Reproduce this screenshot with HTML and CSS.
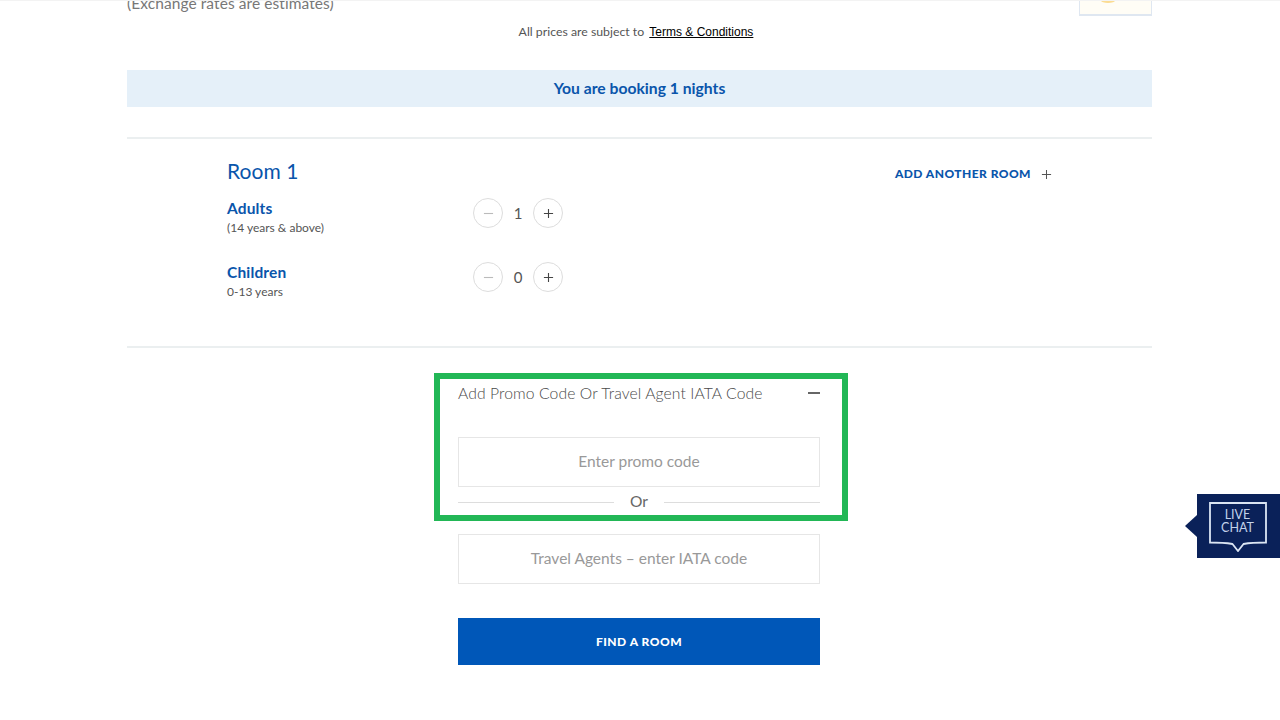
FILE: index.html
```html
<!DOCTYPE html>
<html lang="en">
<head>
<meta charset="utf-8">
<title>Booking</title>
<link rel="stylesheet" href="styles.css">
</head>
<body>
<main class="page">
  <div class="top-row">
    <p class="estimate">(Exchange rates are estimates)</p>
    <div class="thumb"><span class="sun"></span></div>
  </div>
  <p class="terms">All prices are subject to <a class="terms-link" href="#">Terms &amp; Conditions</a></p>
  <div class="banner">You are booking 1 nights</div>
  <section class="room">
    <div class="room-main">
      <h2 class="room-title">Room 1</h2>
      <div class="guest">
        <div class="guest-label"><h3>Adults</h3><p>(14 years &amp; above)</p></div>
        <div class="stepper">
          <span class="step step-off"><svg viewBox="0 0 12 12"><path d="M1 6h10"/></svg></span>
          <span class="count">1</span>
          <span class="step"><svg viewBox="0 0 12 12"><path d="M1 6h10M6 1v10"/></svg></span>
        </div>
      </div>
      <div class="guest">
        <div class="guest-label"><h3>Children</h3><p>0-13 years</p></div>
        <div class="stepper">
          <span class="step step-off"><svg viewBox="0 0 12 12"><path d="M1 6h10"/></svg></span>
          <span class="count">0</span>
          <span class="step"><svg viewBox="0 0 12 12"><path d="M1 6h10M6 1v10"/></svg></span>
        </div>
      </div>
    </div>
    <a class="add-room" href="#">ADD ANOTHER ROOM <svg viewBox="0 0 12 12"><path d="M1 6h10M6 1v10"/></svg></a>
  </section>
  <section class="promo">
    <div class="promo-head">
      <span>Add Promo Code Or Travel Agent IATA Code</span>
      <svg viewBox="0 0 12 2"><path d="M0 1h12"/></svg>
    </div>
    <div class="field field-first">Enter promo code</div>
    <div class="or"><span>Or</span></div>
    <div class="field field-second">Travel Agents – enter IATA code</div>
    <button class="find" type="button">FIND A ROOM</button>
  </section>
</main>
<div class="highlight"></div>
<aside class="chat">
  <svg class="chat-bubble" viewBox="0 0 58 50"><path d="M1 1h56v39.500c-13 0-17 .5-22.500 1.500l-5.500 7-5.500-7c-6-1-9.500-1.500-22.500-1.500z"/></svg>
  <span class="chat-text">LIVE<br>CHAT</span>
</aside>
</body>
</html>
```
FILE: styles.css
```css
html, body { margin: 0; height: 720px; overflow: hidden; background: #fff; }
body { font-family: Lato, "Open Sans", sans-serif; color: #444; border-top: 1px solid #f3f3f3; box-sizing: border-box; }
p, h2, h3 { margin: 0; font-weight: normal; }
a { color: inherit; }
.page { width: 1025px; margin: -1px 0 0 127px; }
.top-row { display: flex; justify-content: space-between; height: 18px; }
.estimate { font-size: 15.500px; letter-spacing: .08px; line-height: 18px; color: #777; margin-top: -6px; }
.thumb { width: 71px; height: 14px; border: 1px solid #dfe7f1; border-width: 0 1px 2px; background: #fffdf6; display: flex; justify-content: center; overflow: hidden; }
.sun { width: 14px; height: 5px; margin: -2px 0 0 -16px; background: #fbdc93; border-radius: 50%; }
.terms { font-size: 12.300px; line-height: 16px; margin-top: 6px; text-align: center; padding-right: 7px; color: #555; }
.terms-link { font-family: "Liberation Sans", sans-serif; font-size: 12px; color: #000; margin-left: 2px; }
.banner { margin-top: 30px; height: 37px; background: #e5f0f9; color: #0a55ab; font-size: 15.700px; font-weight: 700; line-height: 37px; text-align: center; }
.room { margin-top: 30px; border-top: 2px solid #ebeff0; border-bottom: 2px solid #ebeff0; height: 207px; padding: 0 100px; display: flex; justify-content: space-between; align-items: flex-start; }
.room-main { width: 340px; }
.room-title { font-size: 21px; letter-spacing: .05px; line-height: 26px; color: #0a55ab; margin-top: 19px; }
.guest { display: flex; height: 64px; margin-top: 11px; }
.guest + .guest { margin-top: 0; }
.guest-label { width: 246px; padding-top: 3px; }
.guest-label h3 { font-size: 15.500px; font-weight: 700; letter-spacing: .15px; line-height: 20px; color: #0a55ab; }
.guest-label p { font-size: 12px; line-height: 18px; margin-top: 1px; color: #555; }
.stepper { display: flex; align-items: center; height: 30px; margin-top: 3px; }
.step { width: 28px; height: 28px; border: 1px solid #ddd; border-radius: 50%; display: flex; align-items: center; justify-content: center; }
.step svg { width: 11px; height: 11px; fill: none; stroke: #444; stroke-width: 1.200; }
.step-off svg { stroke: #bbb; }
.count { width: 30px; text-align: center; font-size: 15px; color: #555; }
.add-room { display: flex; align-items: center; margin-top: 27px; font-size: 12px; font-weight: 900; letter-spacing: .45px; line-height: 16px; color: #0a55ab; text-decoration: none; }
.add-room svg { width: 11px; height: 11px; margin-left: 10px; fill: none; stroke: #555; stroke-width: 1.100; }
.promo { width: 362px; margin: 0 0 0 331px; }
.promo-head { display: flex; justify-content: space-between; align-items: center; height: 20px; margin-top: 35px; font-size: 15.700px; font-weight: 300; letter-spacing: .1px; color: #4a4a4a; }
.promo-head svg { width: 12px; height: 2px; fill: none; stroke: #333; stroke-width: 1.500; }
.field { height: 46px; padding-bottom: 2px; border: 1px solid #e6e6e6; display: flex; align-items: center; justify-content: center; font-size: 15.500px; color: #999; }
.field-first { margin-top: 34px; }
.field-second { margin-top: 23px; }
.or { display: flex; align-items: center; height: 20px; margin-top: 4px; color: #666; font-size: 15.500px; }
.or::before, .or::after { content: ""; flex: 1; height: 1px; margin-top: 2px; background: #ddd; }
.or span { width: 50px; text-align: center; }
.find { display: block; width: 362px; height: 47px; margin-top: 34px; border: 0; background: #0057b8; color: #fff; font-family: inherit; font-size: 12px; font-weight: 900; letter-spacing: .5px; }
.highlight { position: absolute; left: 434px; top: 373px; width: 402px; height: 136px; border: 6px solid #22b756; }
.chat { position: fixed; left: 1197px; top: 494px; width: 83px; height: 64px; background: #0a2159; color: #c3d2ea; }
.chat::before { content: ""; position: absolute; left: -12px; top: 21px; border: 11px solid transparent; border-left: 0; border-right: 12px solid #0a2159; }
.chat-bubble { position: absolute; left: 12px; top: 8px; width: 58px; height: 50px; fill: none; stroke: #dbe5f3; stroke-width: 1.800; }
.chat-text { position: absolute; left: 12px; top: 14px; width: 57px; text-align: center; font-size: 12.500px; line-height: 13px; }
```
